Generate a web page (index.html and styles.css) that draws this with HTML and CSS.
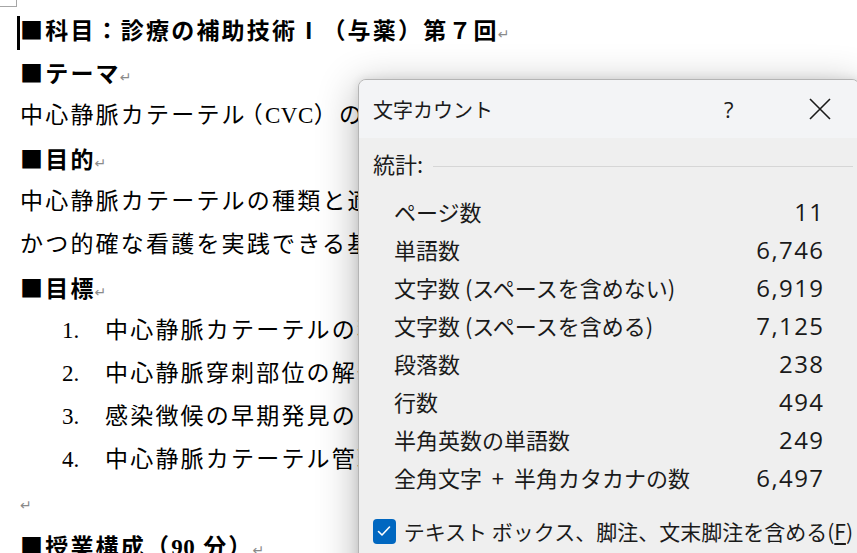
FILE: index.html
```html
<!DOCTYPE html>
<html lang="ja">
<head>
<meta charset="utf-8">
<link rel="stylesheet" href="styles.css">
</head>
<body>
<div class="page">
  <div class="corner-mark"></div>
  <div class="doc">
    <p class="line head"><span class="caret"></span><span class="cjk">■科目：診療の補助技術Ⅰ（与薬）第７回</span><span class="ret">↵</span></p>
    <p class="line head"><span class="cjk">■</span>テーマ<span class="ret">↵</span></p>
    <p class="line clip">中心静脈カテーテル<span class="open">（</span><span class="lat">CVC</span>）の管理と看護<span class="ret">↵</span></p>
    <p class="line head"><span class="cjk">■</span>目的<span class="ret">↵</span></p>
    <p class="line clip">中心静脈カテーテルの種類と適応を理解し、安全</p>
    <p class="line clip">かつ的確な看護を実践できる基礎的能力を養う。<span class="ret">↵</span></p>
    <p class="line head"><span class="cjk">■</span>目標<span class="ret">↵</span></p>
    <ol class="goals">
      <li class="line clip"><span class="num">1.</span>中心静脈カテーテルの種類と適応を説明できる。</li>
      <li class="line clip"><span class="num">2.</span>中心静脈穿刺部位の解剖を説明できる。</li>
      <li class="line clip"><span class="num">3.</span>感染徴候の早期発見のための観察ができる。</li>
      <li class="line clip"><span class="num">4.</span>中心静脈カテーテル管理の看護を説明できる。</li>
    </ol>
    <p class="line"><span class="ret solo">↵</span></p>
    <p class="line head clip"><span class="cjk">■</span>授業構成（<span class="lat">90</span> 分）<span class="ret">↵</span></p>
  </div>

  <div class="dialog">
    <div class="titlebar">
      <span class="title">文字カウント</span>
      <span class="help">?</span>
      <span class="close">
        <svg width="22" height="22" viewBox="0 0 22 22"><path d="M1 1 L21 21 M21 1 L1 21" stroke="#1a1a1a" stroke-width="1.6" fill="none"/></svg>
      </span>
    </div>
    <div class="dbody">
      <div class="group-head"><span>統計:</span><span class="rule"></span></div>
      <div class="stats">
        <div class="row"><span>ページ数</span><span class="val">11</span></div>
        <div class="row"><span>単語数</span><span class="val">6,746</span></div>
        <div class="row"><span>文字数 (スペースを含めない)</span><span class="val">6,919</span></div>
        <div class="row"><span>文字数 (スペースを含める)</span><span class="val">7,125</span></div>
        <div class="row"><span>段落数</span><span class="val">238</span></div>
        <div class="row"><span>行数</span><span class="val">494</span></div>
        <div class="row"><span>半角英数の単語数</span><span class="val">249</span></div>
        <div class="row"><span>全角文字 &nbsp;+&nbsp; 半角カタカナの数</span><span class="val">6,497</span></div>
      </div>
      <div class="check">
        <span class="box"><svg width="14" height="12" viewBox="0 0 14 12"><path d="M1.5 6.5 L5 10 L12.5 2" stroke="#fff" stroke-width="1.6" fill="none" stroke-linecap="round" stroke-linejoin="round"/></svg></span>
        <span class="clabel">テキスト ボックス、脚注、文末脚注を含める(<u>F</u>)</span>
      </div>
    </div>
  </div>
</div>
</body>
</html>
```

FILE: styles.css
```css
html, body {
  margin: 0;
  padding: 0;
  background: #ffffff;
}
.page {
  position: relative;
  width: 857px;
  height: 553px;
  overflow: hidden;
  background: #ffffff;
}
.corner-mark {
  position: absolute;
  left: 0;
  top: 0;
  width: 16px;
  height: 6px;
  border-right: 1px solid #a6a6a6;
  border-bottom: 1px solid #a6a6a6;
}
.doc {
  padding: 8px 0 0 20px;
  font-family: "Liberation Serif", "Noto Sans CJK JP", serif;
  font-size: 23px;
  letter-spacing: 2.2px;
  color: #000;
  white-space: nowrap;
}
.line {
  margin: 0;
  height: 43px;
  line-height: 43px;
  position: relative;
}
.clip {
  width: 338px;
  overflow: hidden;
}
.goals .clip {
  width: 296px;
}
.head {
  font-weight: bold;
}
.cjk {
  font-family: "Noto Sans CJK JP", sans-serif;
}
.open {
  margin-left: -7px;
}
.lat {
  letter-spacing: 0.5px;
}
.caret {
  position: absolute;
  left: -3px;
  top: 8px;
  width: 3px;
  height: 34px;
  background: #000;
}
.ret {
  font-family: "DejaVu Sans", sans-serif;
  font-weight: normal;
  font-size: 14px;
  letter-spacing: 0;
  color: #8a8a8a;
  margin-left: -1px;
}
.ret.solo {
  margin-left: 0;
}
.goals {
  list-style: none;
  margin: 0;
  padding: 0 0 0 42px;
}
.num {
  display: inline-block;
  width: 43px;
  letter-spacing: 0;
}
.dialog {
  position: absolute;
  left: 358px;
  top: 79px;
  width: 500px;
  height: 520px;
  border: 1px solid #b4b4b4;
  border-radius: 8px;
  background: #efefef;
  box-shadow: 0 8px 40px rgba(0, 0, 0, 0.3), 0 0 10px rgba(0, 0, 0, 0.1);
  overflow: hidden;
  font-family: "Open Sans", "Noto Sans CJK JP", sans-serif;
  color: #1a1a1a;
}
.titlebar {
  height: 58px;
  background: #f3f4f6;
  display: flex;
  align-items: center;
  padding-left: 14px;
}
.title {
  flex: 1;
  font-family: "Noto Sans CJK JP", sans-serif;
  font-size: 20px;
}
.help {
  font-size: 22px;
  width: 85px;
}
.close {
  width: 50px;
  display: flex;
  align-items: center;
}
.dbody {
  padding: 10px 6px 0 14px;
}
.group-head {
  display: flex;
  align-items: center;
  gap: 10px;
  height: 30px;
  font-family: "Noto Sans CJK JP", sans-serif;
  font-size: 22px;
}
.rule {
  flex: 1;
  border-top: 1px solid #d6d6d6;
  margin-top: 6px;
}
.stats {
  margin-top: 14px;
  padding: 0 30px 0 21px;
}
.row {
  display: flex;
  justify-content: space-between;
  align-items: center;
  height: 38px;
  font-family: "Noto Sans CJK JP", sans-serif;
  font-size: 22px;
}
.val {
  font-family: "Open Sans", sans-serif;
  font-size: 24px;
  letter-spacing: 1.4px;
  margin-right: -1.4px;
}
.check {
  display: flex;
  align-items: center;
  gap: 8px;
  margin-top: 20px;
}
.box {
  width: 25px;
  height: 25px;
  border-radius: 4px;
  background: #0067c0;
  display: flex;
  align-items: center;
  justify-content: center;
}
.clabel {
  font-family: "Noto Sans CJK JP", sans-serif;
  font-size: 21px;
  white-space: nowrap;
}
.clabel u {
  text-underline-offset: 3px;
}
```
